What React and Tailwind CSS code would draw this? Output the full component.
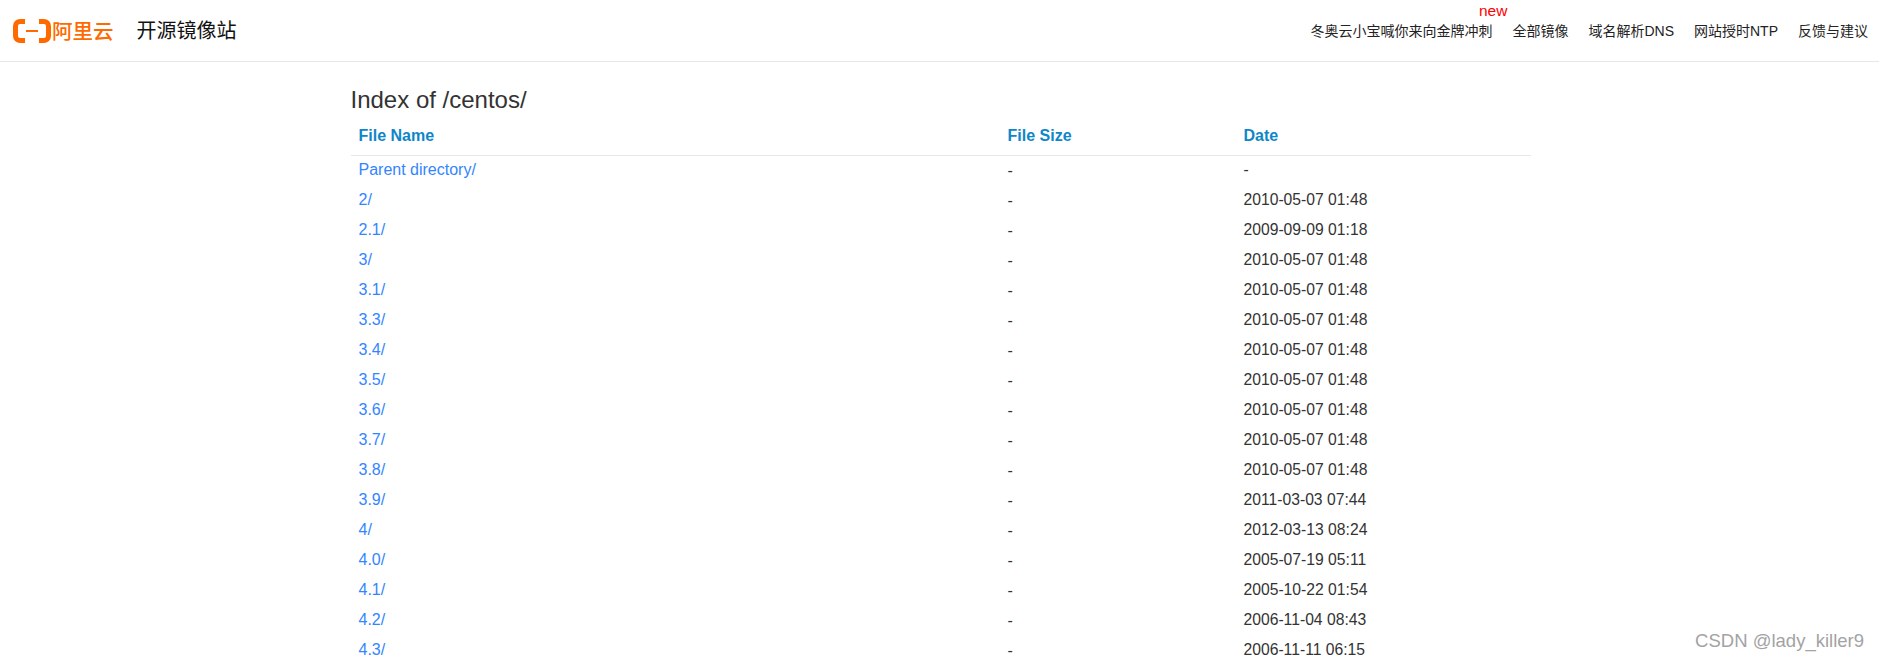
const rows = [
  ["Parent directory/", "-", "-"],
  ["2/", "-", "2010-05-07 01:48"],
  ["2.1/", "-", "2009-09-09 01:18"],
  ["3/", "-", "2010-05-07 01:48"],
  ["3.1/", "-", "2010-05-07 01:48"],
  ["3.3/", "-", "2010-05-07 01:48"],
  ["3.4/", "-", "2010-05-07 01:48"],
  ["3.5/", "-", "2010-05-07 01:48"],
  ["3.6/", "-", "2010-05-07 01:48"],
  ["3.7/", "-", "2010-05-07 01:48"],
  ["3.8/", "-", "2010-05-07 01:48"],
  ["3.9/", "-", "2011-03-03 07:44"],
  ["4/", "-", "2012-03-13 08:24"],
  ["4.0/", "-", "2005-07-19 05:11"],
  ["4.1/", "-", "2005-10-22 01:54"],
  ["4.2/", "-", "2006-11-04 08:43"],
  ["4.3/", "-", "2006-11-11 06:15"],
];

const cjk = "font-['Liberation_Sans','Noto_Sans_CJK_SC',sans-serif]";

function Logo() {
  return (
    <div className="flex items-center gap-[1px]">
      <svg width="38" height="24" viewBox="0 0 38 24" fill="none">
        <path d="M12 2.500H7C4.500 2.500 2.500 4.500 2.500 7V17C2.500 19.500 4.500 21.500 7 21.500H12" stroke="#ff6a00" strokeWidth="5" />
        <path d="M26 2.500H31C33.500 2.500 35.500 4.500 35.500 7V17C35.500 19.500 33.500 21.500 31 21.500H26" stroke="#ff6a00" strokeWidth="5" />
        <path d="M13 12H25" stroke="#ff6a00" strokeWidth="2" />
      </svg>
      <span className="text-[20.500px] leading-none font-medium text-[#ff6a00] font-['Noto_Sans_CJK_SC',sans-serif]">阿里云</span>
    </div>
  );
}

function NavItem({ children, badge }) {
  return (
    <a className="relative text-[14px] leading-5 text-[#222] whitespace-nowrap">
      {children}
      {badge && <span className="absolute right-[-15px] top-[-20px] text-[15.500px] leading-5 text-[#ff0000]">{badge}</span>}
    </a>
  );
}

export default function App() {
  return (
    <div className={`relative h-[662px] overflow-hidden bg-white ${cjk}`}>
      <header className="flex h-[62px] items-center justify-between border-b border-[#e7e7e7] pl-[13px] pr-[11px]">
        <div className="flex items-center gap-[23px]">
          <Logo />
          <span className="text-[20px] leading-7 text-[#111]">开源镜像站</span>
        </div>
        <nav className="flex items-center gap-5">
          <NavItem badge="new">冬奥云小宝喊你来向金牌冲刺</NavItem>
          <NavItem>全部镜像</NavItem>
          <NavItem>域名解析DNS</NavItem>
          <NavItem>网站授时NTP</NavItem>
          <NavItem>反馈与建议</NavItem>
        </nav>
      </header>
      <main className="mx-auto w-[1180px] translate-x-[1px]">
        <h3 className="mt-[25px] mb-[7px] text-[24px] leading-[26px] text-[#333]">Index of /centos/</h3>
        <table className="w-full table-fixed border-collapse text-[16px] leading-5 text-[#333]">
          <thead>
            <tr className="h-[35px] border-b border-[#e7e7e7] text-left font-bold text-[#0e86c9]">
              <th className="w-[55%] px-2 pb-[3px]">File Name</th>
              <th className="w-[20%] px-2 pb-[3px]">File Size</th>
              <th className="w-[25%] px-2 pb-[3px]">Date</th>
            </tr>
          </thead>
          <tbody>
            {rows.map((r) => (
              <tr key={r[0]} className="h-[30px]">
                <td className="px-2 text-[#3385ff]">{r[0]}</td>
                <td className="px-2 pt-[1px]">{r[1]}</td>
                <td className="px-2 text-[15.700px]">{r[2]}</td>
              </tr>
            ))}
          </tbody>
        </table>
      </main>
      <div className="absolute right-[15px] top-[629px] text-[18.500px] leading-6 text-[#a3a3a3]">CSDN @lady_killer9</div>
    </div>
  );
}
